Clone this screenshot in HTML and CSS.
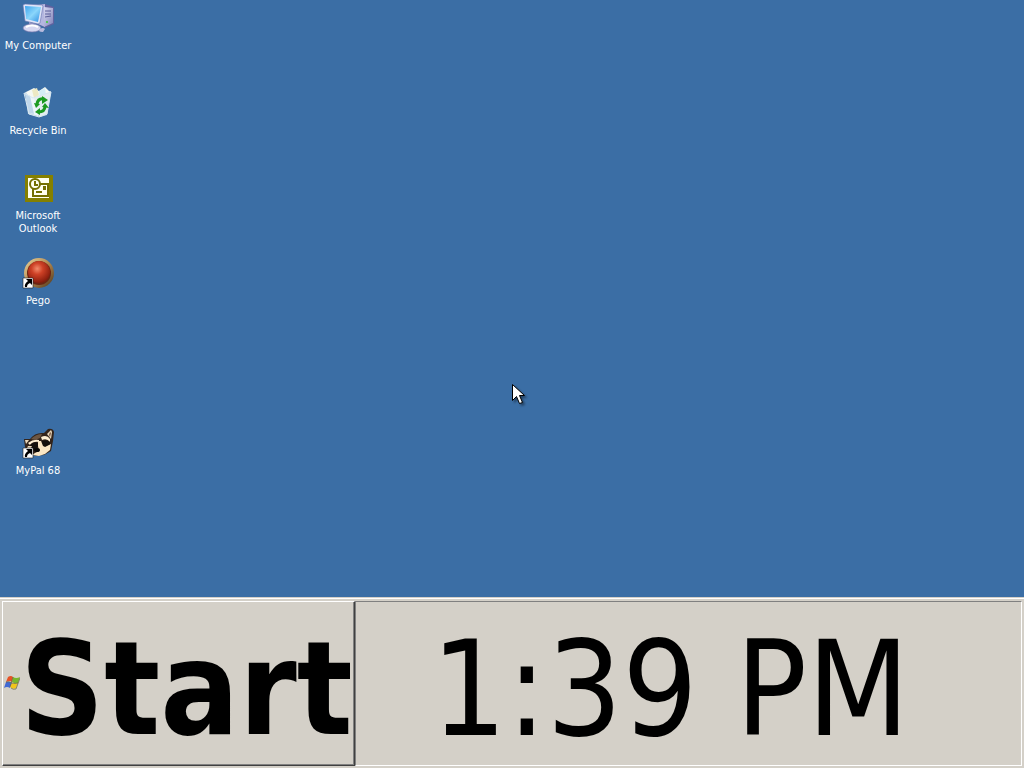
FILE: index.html
```html
<!DOCTYPE html>
<html lang="en">
<head>
<meta charset="utf-8">
<title>Desktop</title>
<link rel="stylesheet" href="styles.css">
</head>
<body>
<main class="desktop">
  <ul class="icons">
    <li><button class="shortcut" type="button">
      <svg class="art" viewBox="0 0 32 32" aria-hidden="true">
        <defs>
          <linearGradient id="screen" x1="0" y1="0" x2="1" y2="1"><stop offset="0" stop-color="#3fa5ee"/><stop offset=".5" stop-color="#8bd6fb"/><stop offset="1" stop-color="#2e8ee2"/></linearGradient>
          <linearGradient id="tower" x1="0" y1="0" x2="1" y2="1"><stop offset="0" stop-color="#d8d9f2"/><stop offset="1" stop-color="#8182b8"/></linearGradient>
        </defs>
        <path d="M16 3l7-1 9 3v17l-9 4-7-4z" fill="#5f629f"/>
        <path d="M16 3l7-1v23l-7-3z" fill="#b4b6df"/>
        <path d="M22 5l9 1v15l-9 4z" fill="url(#tower)"/>
        <path d="M23 9l6 0M23 12l6 0M23 15l6-1" stroke="#5a5e99" stroke-width="1"/>
        <path d="M24 20h2" stroke="#53c654" stroke-width="2"/>
        <path d="M1 3l2-1 17 1 1 1-3 17-2 1L3 19z" fill="#dfe4f8" stroke="#6774ae" stroke-width=".6"/>
        <path d="M3 4l16 1-3 15-12-3z" fill="url(#screen)"/>
        <path d="M7 20l7 2 0 3H7z" fill="#9b9dcc"/>
        <ellipse cx="10" cy="26" rx="9" ry="4" fill="#d5d6f0" stroke="#7376aa" stroke-width=".7"/>
        <path d="M4 25q6-3 12 0" stroke="#fff" stroke-width="2" fill="none"/>
        <path d="M18 27q3-2 5 0l-2 3q-3 0-4-1z" fill="#b9bbdd"/>
      </svg>
      <span>My Computer</span></button></li>
    <li><button class="shortcut" type="button">
      <svg class="art" viewBox="0 0 32 32" aria-hidden="true">
        <path d="M3 5l26-1-4 24-7 2-12-3z" fill="#bdd2df"/>
        <path d="M4 5l8-4 5 3 6-4 5 5-4 10H8z" fill="#f4f8f4"/>
        <path d="M10 3l5-2 2 7-5 3z" fill="#ece9c4"/>
        <path d="M17 4l6-3 1 7-6 2z" fill="#d4edf5"/>
        <path d="M3 6l8 5 5 0 0 18-9-3z" fill="#edf6fa"/>
        <path d="M12 11l17-6-4 22-8 3z" fill="#e3edf0"/>
        <path d="M3 6l5 3 4 18-5-1z" fill="#a6c6e4" opacity=".65"/>
        <path d="M2 6l9 5 18-6-4 22-8 3-10-3z" fill="none" stroke="#d8e8f2"/>
        <g fill="none" stroke="#1b9a20" stroke-width="3"><path d="M15 17q1-6 7-5"/><path d="M23 19q0 6-7 6"/></g>
        <path d="M20 9l6 4-6 4zM18 21v7l-5-3zM12 16l6 1-4 4zM20 20l3-4 4 5z" fill="#1b9a20"/>
      </svg>
      <span>Recycle Bin</span></button></li>
    <li><button class="shortcut" type="button">
      <svg class="art" viewBox="0 0 32 32" aria-hidden="true">
        <path d="M3 3h28v27H3z" fill="#858000"/>
        <path d="M6 6h21v20H6z" fill="#fffff0"/>
        <path d="M14 12h12v12H11v-8" fill="#fffff0" stroke="#736f00" stroke-width="2"/>
        <circle cx="13" cy="12" r="5" fill="#fffff0" stroke="#736f00" stroke-width="2"/>
        <path d="M13 9v4h3M14 20h6" fill="none" stroke="#736f00" stroke-width="2"/>
        <path d="M21 14h3v4h-3z" fill="#736f00"/>
      </svg>
      <span>Microsoft<br>Outlook</span></button></li>
    <li><button class="shortcut" type="button">
      <svg class="art" viewBox="0 0 32 32" aria-hidden="true">
        <defs><radialGradient id="ruby" cx=".42" cy=".35" r=".65"><stop offset="0" stop-color="#f28b6b"/><stop offset=".4" stop-color="#ce4126"/><stop offset="1" stop-color="#861c0c"/></radialGradient>
        <linearGradient id="brass" x1="0" y1="0" x2="1" y2="1"><stop offset="0" stop-color="#edd59a"/><stop offset=".5" stop-color="#b08750"/><stop offset="1" stop-color="#493117"/></linearGradient></defs>
        <circle cx="17" cy="16" r="15" fill="url(#brass)"/>
        <circle cx="17" cy="16" r="12" fill="#6c2412"/>
        <circle cx="17" cy="15" r="11" fill="url(#ruby)"/>
        <path d="M1 21h10v10H1z" fill="#fff" stroke="#222" stroke-width=".6"/>
        <path d="M4 22h6v6l-2-2q-3 1-3 4H3q-1-3 3-6z" fill="#000"/>
      </svg>
      <span>Pego</span></button></li>
    <li class="after-gap"><button class="shortcut" type="button">
      <svg class="art" viewBox="0 0 32 32" aria-hidden="true">
        <path d="M3 20L2 12l6 0q5-7 14-6l4-4q5-1 6 3l-1 9-2 10-7 4-9 1-7-4z" fill="#33241b"/>
        <path d="M25 7l4-4 1 2-1 7z" fill="#ead9bd"/><path d="M27 8l1-3 1 1-1 4z" fill="#795843"/>
        <path d="M3 13l4 0-3 4z" fill="#ead9bd"/>
        <path d="M9 12q5-5 11-5l-2 4-5 2z" fill="#6d5643"/>
        <path d="M6 16q5-4 11-3l0 2q-6-1-9 3z" fill="#fff0d4"/>
        <path d="M19 10q6-3 9 2l0 3q-3-4-8-2z" fill="#fff0d4"/>
        <path d="M8 18q4-4 8-2l0 4-5 3zM20 14q5-2 8 1l0 3-5 2-3-2z" fill="#15100d"/>
        <path d="M16 14l3 0 2 5 2 1 6-3-1 6-5 4-6 2-7-1 3-2 4-2-1-5z" fill="#fae6c4"/>
        <path d="M6 19l4 0-1 2-4 0z" fill="#ead9bd"/>
        <ellipse cx="15" cy="23" rx="3" ry="2" fill="#070605"/>
        <path d="M1 21h10v10H1z" fill="#fff" stroke="#222" stroke-width=".6"/>
        <path d="M4 22h6v6l-2-2q-3 1-3 4H3q-1-3 3-6z" fill="#000"/>
      </svg>
      <span>MyPal 68</span></button></li>
  </ul>
  <svg class="pointer" viewBox="0 0 14 22" aria-hidden="true">
    <path d="M.5.5v16l4-4 3 7 3-1-3-7h5z" fill="#fff" stroke="#000"/>
  </svg>
</main>
<footer class="taskbar">
  <button class="start" type="button">
    <svg class="flag" viewBox="0 0 16 16" aria-hidden="true">
      <path d="M4 1q3-2 5 0l-1 5q-2-2-6 0z" fill="#e65226"/>
      <path d="M9 1q3 2 7 0l-2 6q-3 1-6-1z" fill="#79b82c"/>
      <path d="M2 6q3-1 6 1l-2 5q-3-2-6 0z" fill="#4169d4"/>
      <path d="M8 7q3 1 6 0l-2 5q-3 2-6-1z" fill="#f1c51b"/>
      <path d="M16 2l-4 11q-3 1-5-1M9 1L6 11M2 6q3-1 6 1 3 1 6 0" fill="none" stroke="#686640" stroke-width=".7"/>
    </svg>
    <span class="start-label">Start</span>
  </button>
  <div class="tray"><time datetime="13:39">1:39 PM</time></div>
</footer>
</body>
</html>
```

FILE: styles.css
```css
* {
  box-sizing: border-box;
}

body {
  margin: 0;
  min-height: 100vh;
  display: flex;
  flex-direction: column;
  background: #3b6ea5;
  font-family: "DejaVu Sans Condensed", "DejaVu Sans", sans-serif;
  font-stretch: condensed;
  cursor: default;
}

.desktop {
  flex: 1;
  position: relative;
}

.icons {
  display: grid;
  grid-template-columns: 76px;
  grid-auto-rows: 85px;
  margin: 0;
  padding: 0;
  list-style: none;
}

.after-gap {
  grid-row: 6;
}

.shortcut {
  display: flex;
  flex-direction: column;
  align-items: center;
  gap: 5px;
  width: 100%;
  padding: 2px 0 0;
  border: 0;
  background: none;
  color: #fff;
  font: inherit;
  font-size: 11px;
  line-height: 13px;
  white-space: nowrap;
}

.art {
  width: 32px;
  height: 32px;
}

.pointer {
  position: absolute;
  left: 50%;
  top: 384px;
  width: 14px;
  height: 22px;
  filter: drop-shadow(2px 2px 1px #0006);
}

.taskbar {
  display: flex;
  padding: 3px 2px 2px;
  border-top: 1px solid #d4d0c8;
  background: #d4d0c8;
  box-shadow: inset 0 1px #fff;
}

.start {
  display: flex;
  align-items: center;
  padding: 0 1px;
  border: 1px solid;
  border-color: #fff #404040 #404040 #fff;
  box-shadow: inset -1px -1px #808080;
  background: #d4d0c8;
  color: #000;
  font: inherit;
  font-size: 130px;
  font-weight: bold;
  line-height: 151px;
}

.start-label {
  padding-top: 12px;
}

.flag {
  flex: none;
  width: 16px;
  height: 16px;
}

.tray {
  flex: 1;
  display: flex;
  align-items: center;
  justify-content: center;
  padding: 12px 36px 0 0;
  border: 1px solid;
  border-color: #808080 #fff #fff #808080;
  font-size: 132px;
  line-height: 151px;
  white-space: nowrap;
}
```
